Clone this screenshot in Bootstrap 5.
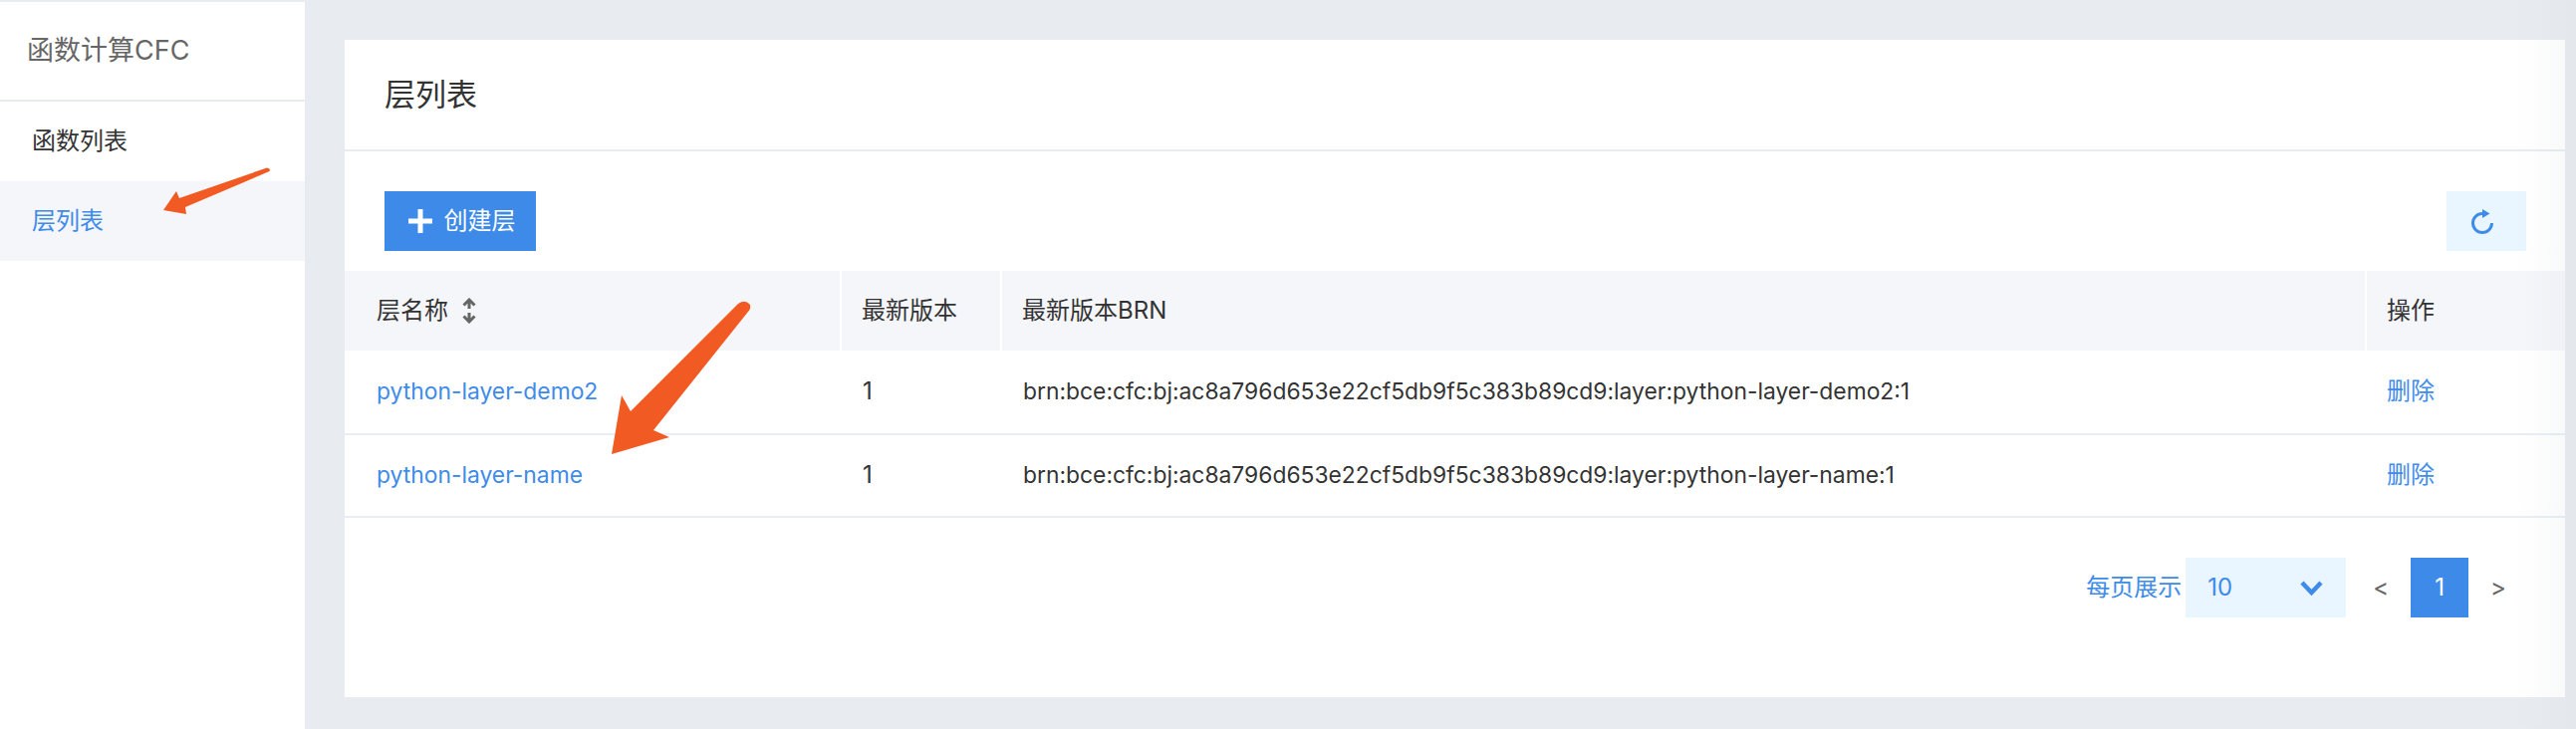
<!DOCTYPE html>
<html lang="zh-CN">
<head>
    <meta charset="UTF-8">
    <meta name="viewport" content="width=device-width, initial-scale=1.0">
    <title>层列表</title>
    <link href="https://cdn.jsdelivr.net/npm/bootstrap@5.3.2/dist/css/bootstrap.min.css" rel="stylesheet">
    <style>
        body {
            background: #e8ebf0;
            font-family: Inter, "Noto Sans CJK SC", sans-serif;
            font-size: 24px;
            color: #333;
            margin: 0;
            height: 732px;
            overflow: hidden;
        }
        .page-wrap { height: 732px; position: relative; }
        .side-menu { width: 306px; background: #fff; margin-top: 2px; flex: none; }
        .side-title { height: 100px; padding-left: 27px; font-size: 27px; color: #666; border-bottom: 2px solid #e8ebf0; }
        .side-menu .nav-link { height: 80px; padding: 0 0 0 32px; color: #333; display: flex; align-items: center; }
        .side-menu .nav-link.active { background: #f5f6fa; color: #3e8bea; }
        .main-area { padding: 40px 11px 32px 40px; }
        .layer-card { height: 660px; border: 0; border-radius: 0; background: #fff; }
        .layer-card .card-header { height: 112px; padding: 0 0 0 40px; background: #fff; border-bottom: 2px solid #e8ebf0; border-radius: 0; font-size: 31px; color: #333; }
        .layer-card .card-body { padding: 40px 0 0; }
        .tool-row { padding: 0 39px 20px 40px; }
        .btn-create { width: 152px; height: 60px; padding: 0 0 0 3px; background: #3d8ae8; border: 0; border-radius: 0; color: #fff; font-size: 24px; gap: 12px; }
        .btn-refresh { width: 80px; height: 60px; padding: 0; background: #e9f5ff; border: 0; border-radius: 0; }
        .layer-table { table-layout: fixed; width: 100%; margin: 0; font-size: 24px; --bs-table-color: #333; }
        .layer-table th { height: 80px; padding: 0 0 0 20px; background: #f5f6fa; font-weight: 400; border: 0; border-left: 2px solid #fff; vertical-align: middle; color: #333; }
        .layer-table th:first-child { border-left: 0; padding-left: 32px; }
        .layer-table td { height: 83.5px; padding: 0 0 0 22px; border: 0; border-bottom: 2px solid #e9eef6; vertical-align: middle; }
        .layer-table td:first-child { padding-left: 32px; }
        .layer-table td:last-child { padding-left: 21px; }
        .layer-table a { color: #3e8bea; text-decoration: none; }
        .layer-table .latin-cell { font-size: 22.85px; }
        .sort-head { gap: 14px; }
        .pager-row { padding: 40px 59px 0 0; gap: 4px; }
        .pager-label { color: #3e8bea; }
        .size-select { width: 161px; height: 60px; padding: 0 23px 0 22px; background: #e9f5ff; border: 0; border-radius: 0; color: #3e8bea; font-size: 24px; }
        .layer-pager { margin: 0 0 0 23px; --bs-pagination-border-width: 0; gap: 23px; align-items: center; }
        .layer-pager .page-link { padding: 0; background: transparent; color: #666; font-size: 24px; border-radius: 0; }
        .layer-pager .page-item.active .page-link { width: 58px; height: 60px; line-height: 60px; text-align: center; background: #3d8ae8; color: #fff; }
        .layer-pager .page-item:not(.active) .page-link { border-radius: 0; }
        .edge-shade { position: absolute; top: 0; right: 0; width: 60px; height: 100%; background: linear-gradient(to right, rgba(200,205,212,0), rgba(200,205,212,.14)); pointer-events: none; }
        .arrow-layer { position: absolute; top: 0; left: 0; pointer-events: none; }
    </style>
</head>
<body>
    <div class="page-wrap d-flex">
        <aside class="side-menu">
            <div class="side-title d-flex align-items-center">函数计算CFC</div>
            <nav class="nav flex-column">
                <a class="nav-link" href="#">函数列表</a>
                <a class="nav-link active" href="#">层列表</a>
            </nav>
        </aside>
        <main class="main-area flex-grow-1">
            <div class="card layer-card">
                <div class="card-header d-flex align-items-center">层列表</div>
                <div class="card-body">
                    <div class="tool-row d-flex justify-content-between">
                        <button class="btn btn-create d-flex align-items-center justify-content-center">
                            <svg width="24" height="24" viewBox="0 0 24 24"><path d="M12 0v24M0 12h24" stroke="#fff" stroke-width="5" fill="none"/></svg>
                            <span>创建层</span>
                        </button>
                        <button class="btn btn-refresh d-flex align-items-center justify-content-center" aria-label="刷新">
                            <svg class="me-2" width="24" height="26" viewBox="0 0 24 26"><path d="M12 5.500A9.500 9.500 0 1 0 21.500 15" stroke="#3e8bea" stroke-width="3" fill="none"/><path d="M12 1l7.500 4.500L12 10z" fill="#3e8bea"/></svg>
                        </button>
                    </div>
                    <table class="table layer-table">
                        <colgroup>
                            <col style="width:498px"><col style="width:161px"><col style="width:1370px"><col>
                        </colgroup>
                        <thead>
                            <tr>
                                <th>
                                    <span class="sort-head d-inline-flex align-items-center">层名称
                                        <svg width="14" height="26" viewBox="0 0 14 26"><path d="M1.500 7.500L7 2l5.500 5.500M7 2v9M1.500 18.500L7 24l5.500-5.500M7 24v-9" stroke="#666" stroke-width="3" fill="none"/></svg>
                                    </span>
                                </th>
                                <th>最新版本</th>
                                <th>最新版本BRN</th>
                                <th>操作</th>
                            </tr>
                        </thead>
                        <tbody>
                            <tr>
                                <td class="latin-cell"><a href="#">python-layer-demo2</a></td>
                                <td>1</td>
                                <td class="latin-cell">brn:bce:cfc:bj:ac8a796d653e22cf5db9f5c383b89cd9:layer:python-layer-demo2:1</td>
                                <td><a href="#">删除</a></td>
                            </tr>
                            <tr>
                                <td class="latin-cell"><a href="#">python-layer-name</a></td>
                                <td>1</td>
                                <td class="latin-cell">brn:bce:cfc:bj:ac8a796d653e22cf5db9f5c383b89cd9:layer:python-layer-name:1</td>
                                <td><a href="#">删除</a></td>
                            </tr>
                        </tbody>
                    </table>
                    <div class="pager-row d-flex justify-content-end align-items-center">
                        <span class="pager-label">每页展示</span>
                        <button class="btn size-select d-flex align-items-center justify-content-between">
                            <span>10</span>
                            <svg width="23" height="15" viewBox="0 0 23 15"><path d="M2 2l9.500 10L21 2" stroke="#3e8bea" stroke-width="4.500" fill="none"/></svg>
                        </button>
                        <ul class="pagination layer-pager">
                            <li class="page-item"><a class="page-link" href="#">&lt;</a></li>
                            <li class="page-item active"><a class="page-link" href="#">1</a></li>
                            <li class="page-item"><a class="page-link" href="#">&gt;</a></li>
                        </ul>
                    </div>
                </div>
            </div>
        </main>
        <div class="edge-shade"></div>
        <!-- annotation arrows drawn on top of the screenshot -->
        <svg class="arrow-layer" width="2586" height="732" viewBox="0 0 2586 732">
            <path d="M268 168.500Q272 169 270.500 172L186 208 187 215 164 211 177 192 180 199z" fill="#f15a22"/>
            <path d="M741 305Q748 300 753 306 754 310 751 313L656 432 672 439 614 456 624 397 633 413z" fill="#f15a22"/>
        </svg>
    </div>
</body>
</html>
